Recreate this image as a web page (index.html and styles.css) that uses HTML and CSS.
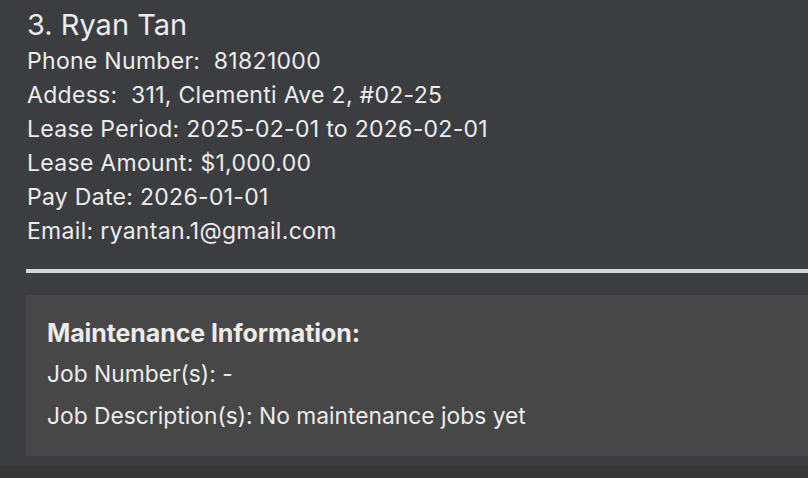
FILE: index.html
```html
<!DOCTYPE html>
<html>
<head>
<meta charset="utf-8">
<link rel="stylesheet" href="styles.css">
</head>
<body>
<div class="page">
  <div class="person">
    <div class="name">3. Ryan Tan</div>
    <div class="field">Phone Number:&nbsp; 81821000</div>
    <div class="field">Addess:&nbsp; 311, Clementi Ave 2, #02-25</div>
    <div class="field">Lease Period: 2025-02-01 to 2026-02-01</div>
    <div class="field">Lease Amount: $1,000.00</div>
    <div class="field">Pay Date: 2026-01-01</div>
    <div class="field">Email: ryantan.1@gmail.com</div>
    <div class="divider"></div>
    <div class="card">
      <div class="card-title">Maintenance Information:</div>
      <div class="card-row">Job Number(s): -</div>
      <div class="card-row">Job Description(s): No maintenance jobs yet</div>
    </div>
  </div>
  <div class="footer"></div>
</div>
</body>
</html>
```

FILE: styles.css
```css
html, body {
  margin: 0;
  padding: 0;
  background: #3c3d40;
}
body {
  font-family: Inter, "Noto Sans", sans-serif;
  color: #ececec;
  width: 808px;
  height: 478px;
  overflow: hidden;
}
.page {
  display: flex;
  flex-direction: column;
  height: 478px;
}
.person {
  padding: 6px 0 10px 26px;
  display: flex;
  flex-direction: column;
}
.name {
  font-size: 29px;
  line-height: 38px;
  padding-left: 1px;
}
.field {
  font-size: 23px;
  line-height: 34px;
  padding-left: 1px;
  letter-spacing: 0.3px;
}
.divider {
  height: 4px;
  background: #d4d5d5;
  margin-top: 21px;
}
.card {
  margin-top: 22px;
  background: #474747;
  padding: 18px 0 19px 21px;
  display: flex;
  flex-direction: column;
}
.card-title {
  font-size: 25px;
  font-weight: 700;
  letter-spacing: -0.1px;
  line-height: 40px;
}
.card-row {
  font-size: 22.8px;
  line-height: 42px;
}
.footer {
  flex: 1;
  background: #363636;
}
```
